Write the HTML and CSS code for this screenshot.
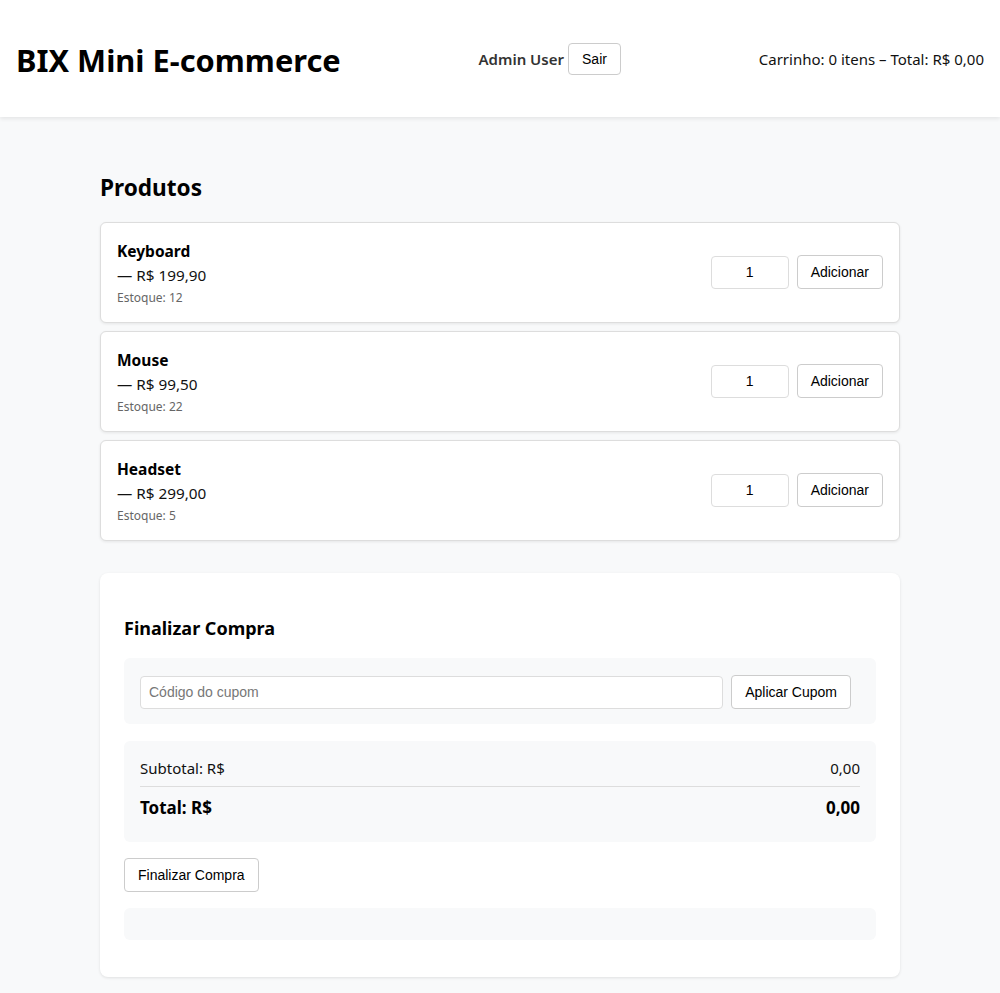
FILE: index.html
```html
<!DOCTYPE html>
<html lang="pt-BR">
<head>
<meta charset="utf-8">
<title>BIX Mini E-commerce</title>
<link rel="stylesheet" href="styles.css">
</head>
<body>
<header class="topbar">
  <h1 class="brand">BIX Mini E-commerce</h1>
  <div class="user">
    <span class="user-name">Admin User</span>
    <button class="btn">Sair</button>
  </div>
  <div class="cart">Carrinho: 0 itens – Total: R$ 0,00</div>
</header>
<main class="container">
  <h2 class="section-title">Produtos</h2>
  <div class="products">
    <div class="product">
      <div class="info">
        <div class="name">Keyboard</div>
        <div class="price">— R$ 199,90</div>
        <div class="stock">Estoque: 12</div>
      </div>
      <div class="actions">
        <input class="qty" type="number" value="1">
        <button class="btn">Adicionar</button>
      </div>
    </div>
    <div class="product">
      <div class="info">
        <div class="name">Mouse</div>
        <div class="price">— R$ 99,50</div>
        <div class="stock">Estoque: 22</div>
      </div>
      <div class="actions">
        <input class="qty" type="number" value="1">
        <button class="btn">Adicionar</button>
      </div>
    </div>
    <div class="product">
      <div class="info">
        <div class="name">Headset</div>
        <div class="price">— R$ 299,00</div>
        <div class="stock">Estoque: 5</div>
      </div>
      <div class="actions">
        <input class="qty" type="number" value="1">
        <button class="btn">Adicionar</button>
      </div>
    </div>
  </div>
  <section class="checkout">
    <h3 class="checkout-title">Finalizar Compra</h3>
    <div class="coupon">
      <input class="coupon-input" type="text" placeholder="Código do cupom">
      <button class="btn">Aplicar Cupom</button>
    </div>
    <div class="summary">
      <div class="row"><span>Subtotal: R$</span><span>0,00</span></div>
      <div class="row total"><span>Total: R$</span><span>0,00</span></div>
    </div>
    <button class="btn">Finalizar Compra</button>
    <div class="message"></div>
  </section>
</main>
</body>
</html>
```
FILE: styles.css
```css
* { box-sizing: border-box; }
html, body { margin: 0; padding: 0; }
body {
  font-family: "Noto Sans", "Open Sans", sans-serif;
  background: #f8f9fa;
  color: #111;
}
.topbar {
  background: #fff;
  display: flex;
  align-items: center;
  justify-content: space-between;
  padding: 16px;
  box-shadow: 0 2px 4px rgba(0,0,0,0.08);
}
.brand {
  font-size: 30.8px;
  font-weight: 700;
  margin: 23px 0 19px;
  line-height: 43px;
  color: #000;
}
.user { display: flex; align-items: center; gap: 4px; }
.user-name { font-weight: 600; font-size: 15px; color: #333; }
.cart { font-size: 15px; color: #111; }
.btn {
  font-family: "Liberation Sans", Arial, sans-serif;
  font-size: 14px;
  line-height: 16px;
  padding: 8px 13px;
  background: #fff;
  border: 1px solid #ccc;
  border-radius: 4px;
  color: #000;
}
.user .btn { padding: 7px 13px; }
.container {
  width: 800px;
  margin: 0 auto;
  padding: 40px 0 16px;
}
.section-title { font-size: 22.6px; font-weight: 700; margin: 16px 0 19px; line-height: 30px; color: #000; }
.products { display: flex; flex-direction: column; gap: 8px; }
.product {
  background: #fff;
  border: 1px solid #ddd;
  border-radius: 6px;
  box-shadow: 0 1px 3px rgba(0,0,0,0.08);
  padding: 16px;
  height: 101px;
  display: flex;
  align-items: center;
  justify-content: space-between;
}
.info { margin-top: 3px; }
.name { font-weight: 700; font-size: 15.5px; line-height: 24px; color: #000; }
.price { font-size: 15.3px; line-height: 24px; }
.stock { font-size: 12px; line-height: 22px; color: #666; }
.actions { display: flex; gap: 8px; align-items: center; margin-top: -1px; }
.qty {
  width: 78px;
  height: 33px;
  border: 1px solid #ddd;
  border-radius: 4px;
  text-align: center;
  font-family: "Liberation Sans", Arial, sans-serif;
  font-size: 14px;
  padding: 0 8px;
  -moz-appearance: textfield;
}
.qty::-webkit-inner-spin-button, .qty::-webkit-outer-spin-button { -webkit-appearance: none; margin: 0; }
.checkout {
  margin-top: 32px;
  background: #fff;
  border-radius: 8px;
  box-shadow: 0 1px 3px rgba(0,0,0,0.1);
  padding: 24px 24px 37px;
}
.checkout-title { font-size: 18px; font-weight: 700; margin: 19px 0 17px; line-height: 25px; color: #000; }
.coupon {
  background: #f8f9fa;
  border-radius: 6px;
  padding: 17px 25px 15px 16px;
  display: flex;
  gap: 8px;
  align-items: center;
}
.coupon-input {
  flex: 1;
  height: 33px;
  border: 1px solid #ddd;
  border-radius: 4px;
  padding: 0 8px;
  font-family: "Liberation Sans", Arial, sans-serif;
  font-size: 14px;
}
.coupon-input::placeholder { color: #777; }
.summary {
  margin-top: 17px;
  background: #f8f9fa;
  border-radius: 6px;
  padding: 16px 16px 19px;
  margin-bottom: 16px;
}
.row { display: flex; justify-content: space-between; font-size: 15px; line-height: 22px; padding-bottom: 7px; }
.row.total { border-top: 1px solid #ddd; padding-top: 10px; padding-bottom: 4px; font-weight: 700; font-size: 17px; color: #000; }
.message {
  margin-top: 16px;
  height: 32px;
  background: #f8f9fa;
  border-radius: 6px;
}
```
